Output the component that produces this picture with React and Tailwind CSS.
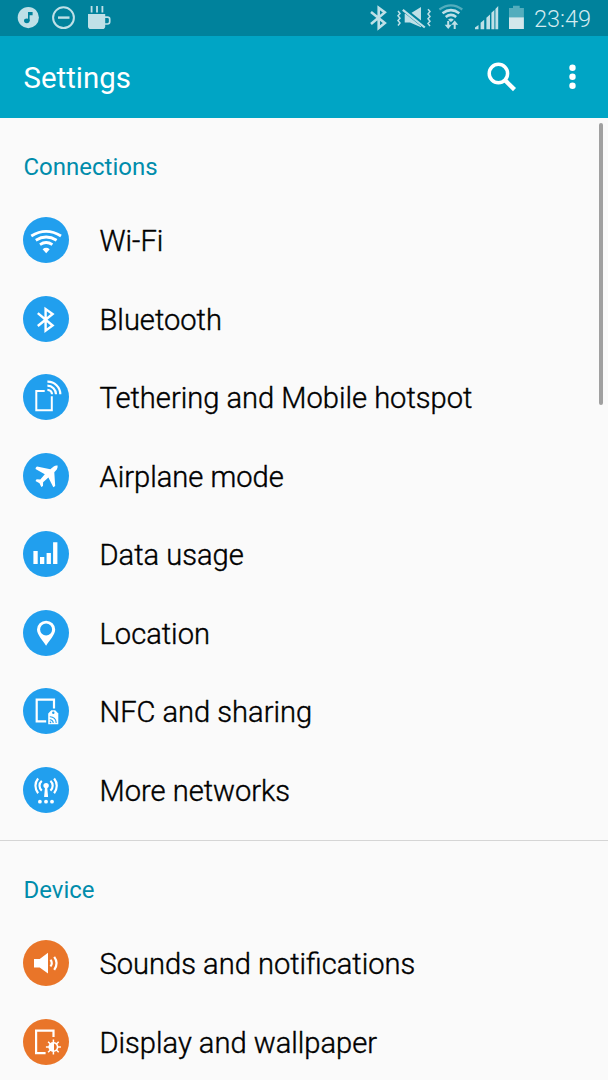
import React from "react";

const line = { fill: "none", stroke: "white", strokeWidth: 2.2 };

const glyphs = {
  wifi: (
    <>
      <g {...line} strokeWidth="2.8">
        <path d="M8.3 19Q23.1 9.6 38 19" />
        <path d="M12.8 23.2Q23.1 16.8 33.6 23.2" />
        <path d="M17 27.6Q23.1 23.4 29.4 27.6" />
      </g>
      <path d="M19.6 32.2Q23.1 29.4 26.7 32.2L23.2 36.2Z" fill="white" />
    </>
  ),
  bluetooth: <path d="M14.8 17.1L29.6 29.5L22.6 34.6V13L29.6 18L14.8 30" {...line} strokeWidth="2.4" />,
  tether: (
    <g {...line}>
      <path d="M21.7 17H13.3V36.2H28.8V22.3" strokeWidth="2" />
      <path d="M24.4 7.7A12.6 12.6 0 0 1 37.3 20.3M24.4 11.7A8.6 8.6 0 0 1 33 20.3M24.4 15.8A4.6 4.6 0 0 1 29 20.3" />
    </g>
  ),
  plane: (
    <path
      d="M12.5 15.9L21.8 21.3L17.3 26.4L13.6 26.2L12.5 28L16.5 30.2L18.3 34L20 32.9L20.1 29.2L25.4 24.5L30.3 34.3L32.2 33L31.3 19.2L33.8 16.4Q34.9 14.4 34.6 12.5Q32.6 12.1 30.7 13.4L27.3 16.2L14 13.6Q12.5 14.3 12.5 15.9Z"
      fill="white"
    />
  ),
  data: <path d="M10.4 20H14.7V33H10.4ZM17 26H21.3V33H17ZM23.6 22H27.9V33H23.6ZM30.1 11.3H34.4V33H30.1Z" fill="white" />,
  location: (
    <path
      fillRule="evenodd"
      d="M23.1 10.7A9.1 8.9 0 0 1 32.2 19.6C32.2 24.6 26.2 31 23.1 35.8C20 31 14 24.6 14 19.6A9.1 8.9 0 0 1 23.1 10.7ZM23.1 13.5A6 6 0 1 0 23.1 25.5A6 6 0 0 0 23.1 13.5Z"
      fill="white"
    />
  ),
  nfc: (
    <>
      <path d="M31 20.5V11.7H13.7V33.3H23.2" {...line} />
      <path d="M28.3 22.2H32.2L35.3 25.5V36.2H25.2V25.5Z" fill="white" />
      <circle cx="30.3" cy="24.7" r="1.2" fill="#219fee" />
      <path d="M26.8 28.8A6 6 0 0 1 33.2 35M26.8 31.7A3.2 3.2 0 0 1 30.2 35" fill="none" stroke="#219fee" strokeWidth="1.1" />
      <circle cx="27.5" cy="34.4" r=".8" fill="#219fee" />
    </>
  ),
  networks: (
    <>
      <circle cx="23.1" cy="18.6" r="2.7" fill="white" />
      <path d="M22 20H24.2L25.1 30H21.1Z" fill="white" />
      <path d="M18.8 13.9A6.4 6.4 0 0 0 18.8 23.7M27.4 13.9A6.4 6.4 0 0 1 27.4 23.7M15.1 11.5A11.5 11.5 0 0 0 15.1 26.2M31.1 11.5A11.5 11.5 0 0 1 31.1 26.2" {...line} />
      <g fill="white">
        <circle cx="16.9" cy="34.7" r="1.9" />
        <circle cx="23" cy="34.7" r="1.9" />
        <circle cx="29" cy="34.7" r="1.9" />
      </g>
    </>
  ),
  sound: (
    <>
      <path d="M11 19H16.7L25 12.7V33.5L16.7 27.6H11Z" fill="white" />
      <path d="M27.4 19.9A4.5 4.5 0 0 1 27.4 26.4M31.2 16.8Q36 23.2 31.2 29.8" {...line} />
    </>
  ),
  display: (
    <>
      <path d="M30.5 18V11.7H13.1V34.2H22.6" {...line} />
      <path d="M30.4 20.5V35.5M22.9 28H37.9M25.1 22.7L35.7 33.3M35.7 22.7L25.1 33.3" stroke="white" strokeWidth="1.5" />
      <circle cx="30.4" cy="28" r="5" fill="white" />
      <path d="M31 24.5A3.6 3.6 0 0 1 31 31.5Z" fill="#e97529" />
    </>
  ),
};

function Row({ icon, label, orange }) {
  return (
    <li className="flex h-[78.5px] items-center pl-[23px]">
      <svg viewBox="0 0 46 46" className="h-[46px] w-[46px] shrink-0">
        <circle cx="23" cy="23" r="23" fill={orange ? "#e97529" : "#219fee"} />
        {glyphs[icon]}
      </svg>
      <span className="ml-[30.5px] mt-[2.5px] text-[29.1px] leading-[36px] font-[350] whitespace-nowrap text-black [-webkit-text-stroke:0.4px_black]">
        {label}
      </span>
    </li>
  );
}

const connections = [
  ["wifi", "Wi-Fi"],
  ["bluetooth", "Bluetooth"],
  ["tether", "Tethering and Mobile hotspot"],
  ["plane", "Airplane mode"],
  ["data", "Data usage"],
  ["location", "Location"],
  ["nfc", "NFC and sharing"],
  ["networks", "More networks"],
];

const device = [
  ["sound", "Sounds and notifications"],
  ["display", "Display and wallpaper"],
];

function StatusBar() {
  return (
    <div className="flex h-[35.5px] shrink-0 items-center justify-between bg-[#00829c] pr-[17px]">
      <svg viewBox="0 0 120 36" className="h-[36px] w-[120px]">
        <circle cx="28.3" cy="17.6" r="10.6" fill="#bfe0e7" />
        <ellipse cx="26.8" cy="20.8" rx="2.8" ry="2.4" fill="#00829c" />
        <path d="M28 12H32.6V15.3H29.6V21H28Z" fill="#00829c" />
        <circle cx="63.5" cy="17.7" r="10.4" fill="none" stroke="#bfe0e7" strokeWidth="2" />
        <path d="M58 17.6H69.5" stroke="#bfe0e7" strokeWidth="2.4" />
        <path d="M88 14H105.2V26.2Q105.2 29 102.4 29H90.8Q88 29 88 26.2Z" fill="#bfe0e7" />
        <path d="M105 17.2H107.5Q109.7 17.2 109.7 19.2V21.8Q109.7 24 107.5 24H105" fill="none" stroke="#bfe0e7" strokeWidth="1.7" />
        <path d="M91.6 6V12.5M97 6V12.5M102.4 6V12.5" stroke="#bfe0e7" strokeWidth="1.8" />
      </svg>
      <div className="flex items-center">
        <svg viewBox="366 0 164 36" className="h-[36px] w-[164px]">
          <path d="M371 12L384.8 23.1L378.7 28V7.8L384.8 12.4L371 24" fill="none" stroke="#bfe0e7" strokeWidth="2.6" />
          <path d="M404.7 13.7H410L421 7V27.3L410 22.6H404.7Z" fill="#bfe0e7" />
          <path d="M402.8 8.8L425.2 26.8" stroke="#00829c" strokeWidth="4.6" />
          <path d="M402.8 9.8L424.8 27.5" stroke="#bfe0e7" strokeWidth="2.2" />
          <path d="M398 11L400 13.4L398 15.8L400 18.2L398 20.6L400 23L398 25.4M428 9.2L430 11.6L428 14L430 16.4L428 18.8L430 21.2L428 23.6L430 26" fill="none" stroke="#bfe0e7" strokeWidth="1.5" />
          <path d="M439.4 9.5Q451 1.3 462.3 9.5" fill="none" stroke="#53adbd" strokeWidth="2.2" />
          <path d="M442.5 13.3Q451 7 459.3 13.3M445.7 17Q451 12.8 456.2 17" fill="none" stroke="#bfe0e7" strokeWidth="2.5" />
          <path d="M448 19.8Q451 17.2 453.8 19.8L451 22Z" fill="#bfe0e7" />
          <path d="M448.2 21V26.5M454.7 29V23.5" fill="none" stroke="#bfe0e7" strokeWidth="2" />
          <path d="M444.7 24.8H451.7L448.2 29ZM451.2 24.8L454.7 20.4L458.2 24.8Z" fill="#bfe0e7" />
          <path d="M475 29.2V27.5L478.5 25V29.2ZM480.6 29.2V22.7L484.2 19.7V29.2ZM486.4 29.2V17.8L490 14.5V29.2ZM491.4 29.2V12.7L494.4 10V29.2ZM495.4 29.2V9L498.2 6V29.2Z" fill="#bfe0e7" />
          <path d="M509 8H513V5.8H519.7V8H523.9V17.5H509Z" fill="#53adbd" />
          <path d="M509 17.3H523.9V29H509Z" fill="#d3e7eb" />
        </svg>
        <span className="ml-[4px] mt-[2px] text-[23.5px] leading-7 font-light text-[#d3ebf0]">23:49</span>
      </div>
    </div>
  );
}

export default function App() {
  return (
    <div className="relative flex h-[1080px] w-[608px] flex-col overflow-hidden bg-[#fafafa] font-[Roboto,sans-serif]">
      <StatusBar />
      <header className="flex h-[82.5px] shrink-0 items-center bg-[#00a5c5] pl-[23.5px] text-white">
        <h1 className="mt-[2px] text-[29.4px] leading-9">Settings</h1>
        <svg viewBox="0 0 110 40" className="ml-auto h-[40px] w-[122px]" preserveAspectRatio="xMinYMid meet">
          <circle cx="12.4" cy="16.5" r="9.2" fill="none" stroke="white" strokeWidth="3.5" />
          <path d="M18.8 23L28.5 32.6" stroke="white" strokeWidth="4.3" />
          <g fill="white">
            <circle cx="86.5" cy="10.8" r="3.2" />
            <circle cx="86.5" cy="19.8" r="3.2" />
            <circle cx="86.5" cy="28.7" r="3.2" />
          </g>
        </svg>
      </header>
      <main>
        <section className="h-[723px] border-b border-[#d5d5d5]">
          <h2 className="h-[82.75px] pl-[23.5px] pt-[32.5px] text-[24px] leading-8 text-[#008cab]">Connections</h2>
          <ul>
            {connections.map(([icon, label]) => (
              <Row key={icon} icon={icon} label={label} />
            ))}
          </ul>
        </section>
        <section>
          <h2 className="h-[82.75px] pl-[23.5px] pt-[32.5px] text-[24px] leading-8 text-[#008cab]">Device</h2>
          <ul>
            {device.map(([icon, label]) => (
              <Row key={icon} icon={icon} label={label} orange />
            ))}
          </ul>
        </section>
      </main>
      <div className="absolute top-[123px] right-[5px] h-[282px] w-[4.5px] rounded-full bg-[#a0a0a0]" />
    </div>
  );
}
